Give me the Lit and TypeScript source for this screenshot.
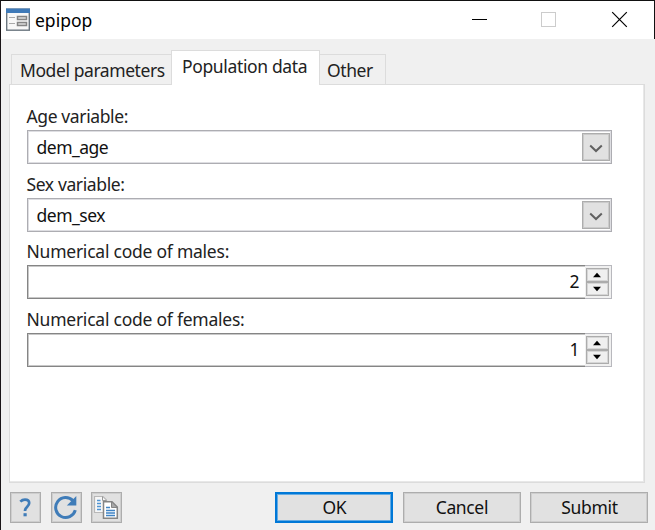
import { LitElement, html, css, svg } from "lit";
import { customElement, property } from "lit/decorators.js";

@customElement("form-row")
class FormRow extends LitElement {
  @property() label = "";
  @property() value = "";
  @property() kind = "combo";

  static styles = css`
    :host { display: block; height: 67.6px; }
    .label { height: 24px; line-height: 21px; white-space: nowrap; letter-spacing: -0.38px; }
    .label.wide { letter-spacing: -0.24px; }
    .field { box-sizing: border-box; height: 34px; display: flex; background: #fff; color: #111; line-height: 28px; }
    .combo { border: 1px solid #adadb2; box-shadow: inset 0 0 0 1px #dedee2; padding: 2px 1px 2px 9px; }
    .spin { border: 1px solid #858585; box-shadow: inset 0 0 0 1px #c8c8c8; }
    .text { flex: 1; letter-spacing: -0.5px; }
    .drop { box-sizing: border-box; width: 28px; height: 28px; border: 1px solid #adadad; box-shadow: inset 0 0 0 1px #cacaca; background: #e1e1e1; }
    .num { flex: 1; text-align: right; padding-right: 6px; line-height: 31px; }
    .arrows { box-sizing: border-box; width: 27px; margin: -1px; height: 34px; border: 1px solid #b8b8bd; border-left: 0; padding: 2px 2px 2px 1px; display: flex; flex-direction: column; background: #f0f0f0; z-index: 1; }
    .step { box-sizing: border-box; flex: 1; border: 1px solid #acacac; box-shadow: inset 0 0 0 1px #d6d6d6; display: flex; justify-content: center; align-items: center; background: #f0f0f0; }
    svg { display: block; }
  `;

  render() {
    return html`<div class="label ${this.kind === "spin" ? "wide" : ""}">${this.label}</div>
      ${this.kind === "combo"
        ? html`<div class="field combo"><span class="text">${this.value}</span>
            <div class="drop"><svg width="26" height="26" viewBox="0 0 26 26"><path d="M7.2 11.5 13 17 18.8 11.5" fill="none" stroke="#606060" stroke-width="2"/></svg></div></div>`
        : html`<div class="field spin"><span class="num">${this.value}</span>
            <div class="arrows">
              <div class="step"><svg width="10" height="6"><path d="M1 5.3 5 .8 9 5.3z" fill="#000"/></svg></div>
              <div class="step"><svg width="10" height="6"><path d="M1 .7 5 5.2 9 .7z" fill="#000"/></svg></div>
            </div></div>`}`;
  }
}

const helpIcon = svg`<svg width="30" height="30" viewBox="0 0 30 30"><path d="M10.3 9.6Q12.3 7.6 15 7.6C18 7.6 19.2 9 19.2 11C19.2 14.8 15 14.7 15 19" fill="none" stroke="#3f7cb8" stroke-width="2.7"/><rect x="13.5" y="21.2" width="3.2" height="3.1" fill="#3f7cb8"/></svg>`;
const refreshIcon = svg`<svg width="30" height="30" viewBox="0 0 30 30"><path d="M22 8.7A10 10 0 1 0 24.3 18.2" fill="none" stroke="#3f7cb8" stroke-width="3"/><path d="M25.3 4V13.4H15.8z" fill="#3f7cb8"/></svg>`;
const copyIcon = svg`<svg width="30" height="30" viewBox="0 0 30 30">
  <path d="M3.5 4.5H12L15.5 8V20.5H3.5z" fill="#f7f7f7" stroke="#b8b8b8" stroke-width="1.2"/><path d="M11.5 4.5V8.5H15.5" fill="none" stroke="#999"/>
  <path d="M6 8.5H9.5M6 11.5H10M6 14.5H10M6 17.5H10" stroke="#4f94d2" stroke-width="1.4"/>
  <path d="M12.5 9.8H21L26.3 15V26.3H12.5z" fill="#fff" stroke="#858585" stroke-width="1.5"/><path d="M20.5 9.8V15.5H26.3z" fill="#aaa" stroke="#858585"/>
  <path d="M15 15.5H19M15 18.5H24M15 21H24M15 23.6H24" stroke="#3f83c4" stroke-width="1.5"/></svg>`;

@customElement("app-root")
class AppRoot extends LitElement {
  static styles = css`
    :host { display: block; width: 655px; height: 530px; overflow: hidden; font: 17.5px/24px "Noto Sans", "Open Sans", sans-serif; color: #222; }
    .window { box-sizing: border-box; height: 530px; background: #f0f0f0; border-top: 1px solid #111; border-left: 1px solid #1a1518; display: flex; flex-direction: column; }
    .title { box-sizing: border-box; height: 38px; background: #fff; border-right: 1px solid #111; display: flex; align-items: center; padding-left: 5px; color: #000; flex: none; }
    .name { flex: 1; margin-left: 5px; }
    .ctl { width: 70px; height: 38px; }
    .tabs { display: flex; align-items: flex-end; height: 34px; margin: 12px 0 -1px 10px; z-index: 1; flex: none; letter-spacing: -0.42px; white-space: nowrap; }
    .tab { box-sizing: border-box; height: 31px; border: 1px solid #dcdcdc; line-height: 30px; padding-left: 8px; }
    .model { width: 160px; border-right: 0; }
    .active { width: 149px; height: 35px; background: #fff; border-bottom: 0; padding-left: 10px; letter-spacing: -0.36px; }
    .other { width: 66px; border-left: 0; padding-left: 7px; }
    .panel { box-sizing: border-box; width: 636px; height: 399px; margin-left: 8px; border: 1px solid #dcdcdc; box-shadow: inset -1px -1px #e8e8e8; background: #fff; padding: 21px 0 0 16.5px; flex: none; }
    .fields { width: 585px; }
    .actions { display: flex; margin: 9px 0 0 9px; }
    .btn { box-sizing: border-box; width: 118px; height: 31px; border: 1px solid #adadad; box-shadow: inset 0 0 0 1px #cecece; background: #e1e1e1; text-align: center; line-height: 28px; margin-right: 9.6px; color: #111; flex: none; letter-spacing: -0.35px; }
    .icon { width: 31px; }
    .icon svg { display: block; margin: -1px 0 0 -1px; }
    .ok { margin-left: 143.5px; border: 2px solid #0078d7; box-shadow: inset 0 0 0 1px #64abe3; line-height: 26px; }
  `;

  render() {
    return html`<div class="window">
      <div class="title">
        <svg width="24" height="24" viewBox="0 0 24 24"><rect x=".7" y="1.2" width="22.6" height="21" fill="#f8f8f8" stroke="#6c7780" stroke-width="1.4"/><path d="M0 .5H24V5H0z" fill="#3f7ab8"/><path d="M3 9.5H9M3 15.5H9" stroke="#aaa" stroke-width="1.2"/><path d="M11.5 8.5H20.5V11.5H11.5zM11.5 14.5H20.5V17.5H11.5z" fill="#ddd" stroke="#858585" stroke-width="1.5"/></svg>
        <span class="name">epipop</span>
        <svg class="ctl" viewBox="0 0 70 38"><path d="M28 18.5H43" stroke="#000"/></svg>
        <svg class="ctl" viewBox="0 0 70 38"><rect x="27.5" y="11.5" width="14" height="14" fill="none" stroke="#ccc"/></svg>
        <svg class="ctl" viewBox="0 0 70 38"><path d="M28.2 11.2 42.8 25.8M42.8 11.2 28.2 25.8" stroke="#000" stroke-width="1.2"/></svg>
      </div>
      <div class="tabs"><div class="tab model">Model parameters</div><div class="tab active">Population data</div><div class="tab other">Other</div></div>
      <div class="panel"><div class="fields">
        <form-row label="Age variable:" value="dem_age"></form-row>
        <form-row label="Sex variable:" value="dem_sex"></form-row>
        <form-row label="Numerical code of males:" value="2" kind="spin"></form-row>
        <form-row label="Numerical code of females:" value="1" kind="spin"></form-row>
      </div></div>
      <div class="actions">
        <div class="btn icon">${helpIcon}</div><div class="btn icon">${refreshIcon}</div><div class="btn icon">${copyIcon}</div>
        <div class="btn ok">OK</div><div class="btn">Cancel</div><div class="btn">Submit</div>
      </div>
    </div>`;
  }
}
